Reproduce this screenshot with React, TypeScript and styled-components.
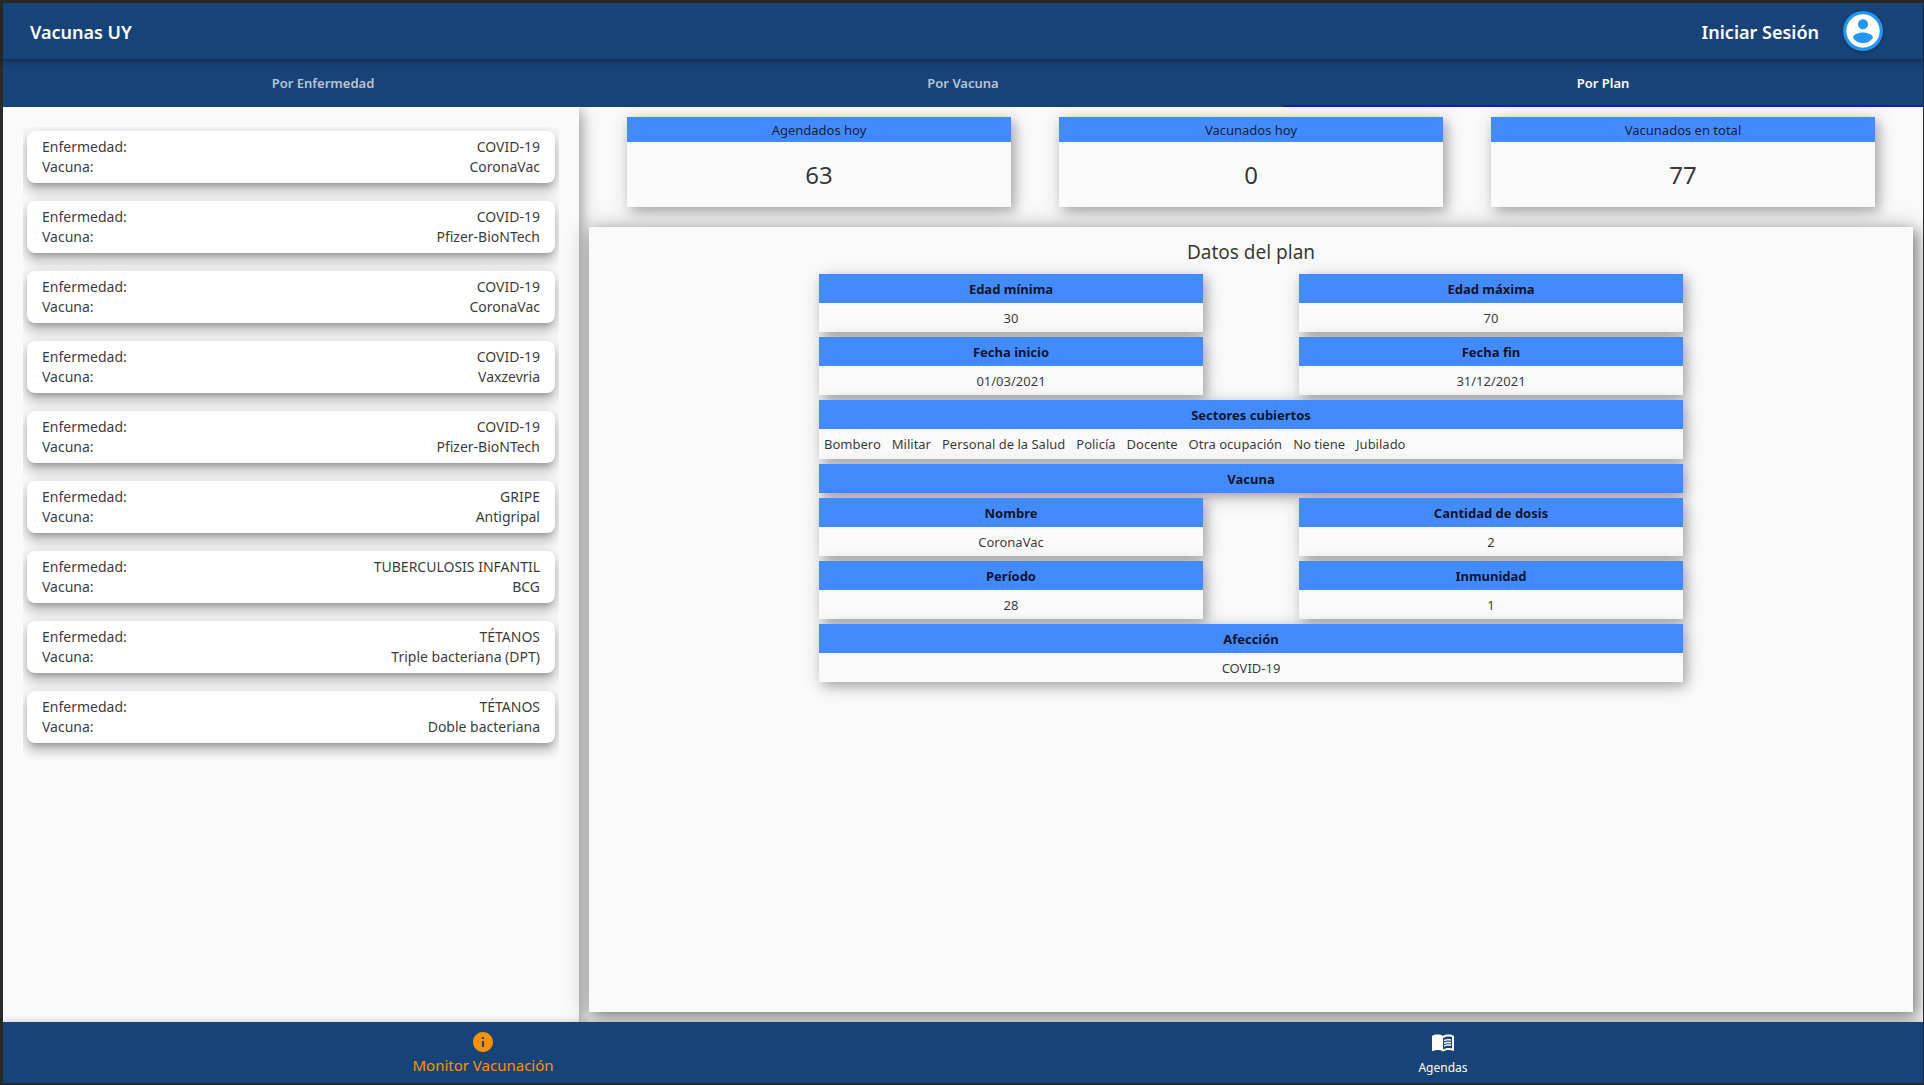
import React, { useState } from "react";
import styled, { createGlobalStyle } from "styled-components";
import { MdInfo, MdMenuBook } from "react-icons/md";

const GlobalStyle = createGlobalStyle`
  *, *::before, *::after { box-sizing: border-box; }
  body { margin: 0; background: #2a2a2a; }
  button { font: inherit; color: inherit; border: 0; background: none; cursor: pointer; }
`;

const colors = {
  navy: "#184378",
  blue: "#448aff",
  surface: "#fafafa",
  text: "rgba(0, 0, 0, 0.8)",
  heading: "rgba(0, 0, 0, 0.87)",
  accent: "#ff9100",
};

/* One fifth and one twentieth of the window inside the frame. */
const fifth = "calc((100vw - 4px) / 5)";
const twentieth = "calc((100vw - 4px) / 20)";

const raised = `
  0 5px 5px -3px rgba(0, 0, 0, 0.2),
  0 8px 12px 1px rgba(0, 0, 0, 0.16),
  0 3px 14px 2px rgba(0, 0, 0, 0.13)`;

const cast = `
  4px 4px 10px rgba(0, 0, 0, 0.2),
  2px 4px 20px rgba(0, 0, 0, 0.2)`;

const castDeep = `
  4px 4px 10px rgba(0, 0, 0, 0.25),
  2px 4px 22px 2px rgba(0, 0, 0, 0.34)`;

const Shell = styled.div`
  display: flex;
  flex-direction: column;
  min-height: 100vh;
  border: solid #2a2a2a;
  border-width: 3px 1px 2px 3px;
  background: ${colors.surface};
  color: ${colors.text};
  font-family: "Segoe UI", "Noto Sans", "Open Sans", sans-serif;
  font-size: 14px;
`;

const TopBar = styled.header`
  position: relative;
  z-index: 3;
  display: flex;
  align-items: center;
  justify-content: space-between;
  height: 56px;
  padding: 0 40px 0 27px;
  background: ${colors.navy};
  color: #fff;
  box-shadow: 0 2px 4px rgba(0, 0, 0, 0.3), 0 2px 8px rgba(0, 0, 0, 0.15);
`;

const Brand = styled.h1`
  margin: 0;
  padding-top: 2px;
  font-size: 18px;
  font-weight: 600;
  line-height: 28px;
`;

const Account = styled.button`
  display: flex;
  align-items: center;
  gap: 24px;
  padding: 0;
`;

const AccountLabel = styled.span`
  padding-top: 2px;
  font-size: 18px;
  font-weight: 600;
  line-height: 28px;
`;

const Avatar = styled.span`
  display: flex;
  align-items: center;
  justify-content: center;
  width: 40px;
  height: 40px;
  border-radius: 50%;
  background: #2196f3;
  box-shadow: 0 1px 3px rgba(0, 0, 0, 0.4);
`;

const Tabs = styled.nav`
  position: relative;
  z-index: 2;
  display: grid;
  grid-template-columns: repeat(3, 1fr);
  height: 48px;
  background: ${colors.navy};
`;

const Tab = styled.button<{ $active: boolean }>`
  padding: 2px 0 0;
  border-bottom: 2px solid ${(p) => (p.$active ? "#0a1fc8" : "transparent")};
  color: ${(p) => (p.$active ? "#fff" : "rgba(255, 255, 255, 0.7)")};
  font-size: 13px;
  font-weight: 600;
`;

const Body = styled.div`
  flex: 1;
  display: grid;
  grid-template-columns: 3fr 7fr;
  overflow: hidden;
`;

const Sidebar = styled.aside`
  padding: 20px;
  background: ${colors.surface};
  box-shadow: ${cast};
`;

const PlanList = styled.ul`
  display: flex;
  flex-direction: column;
  gap: 18px;
  margin: 0;
  padding: 4px 4px 20px;
  list-style: none;
  overflow: hidden;
`;

const PlanCard = styled.button`
  display: block;
  width: 100%;
  padding: 6px 15px;
  border-radius: 8px;
  background: #fff;
  box-shadow: ${raised};
`;

const PlanLine = styled.span`
  display: flex;
  justify-content: space-between;
  line-height: 20px;
`;

const Main = styled.main`
  display: flex;
  flex-direction: column;
  gap: 20px;
  padding: 10px;
`;

const Stats = styled.section`
  display: flex;
  justify-content: space-evenly;
  margin: 0 -10px;
`;

const StatCard = styled.article`
  width: ${fifth};
  background: ${colors.surface};
  box-shadow: ${cast};
  text-align: center;
`;

const StatLabel = styled.h2`
  margin: 0;
  padding-top: 1px;
  background: ${colors.blue};
  font-size: 13px;
  font-weight: 400;
  line-height: 24px;
`;

const StatValue = styled.p`
  margin: 0;
  padding: 16px 0;
  font-size: 24px;
  line-height: 33px;
`;

const PlanPanel = styled.section`
  position: relative;
  flex: 1;
  padding: 10px 0;
  background: ${colors.surface};
  box-shadow: ${castDeep};
`;

const PanelTitle = styled.h2`
  margin: 0 0 7px;
  font-size: 19px;
  font-weight: 400;
  line-height: 30px;
  text-align: center;
`;

const PlanData = styled.dl`
  display: grid;
  grid-template-columns: ${fifth} ${fifth};
  column-gap: ${twentieth};
  row-gap: 5px;
  justify-content: center;
  margin: 0;
  font-size: 13px;
  line-height: 19px;
`;

const Field = styled.div<{ $wide?: boolean }>`
  grid-column: ${(p) => (p.$wide ? "1 / -1" : "auto")};
  background: ${colors.surface};
  box-shadow: ${cast};
  text-align: center;
`;

const FieldLabel = styled.dt`
  padding: 6px 5px 4px;
  background: ${colors.blue};
  color: ${colors.heading};
  font-weight: 700;
`;

const FieldValue = styled.dd`
  margin: 0;
  padding: 6px 5px 4px;
`;

const SectorList = styled(FieldValue)`
  display: flex;
  flex-wrap: wrap;
  gap: 11px;
  padding: 5px;
  line-height: 20px;
`;

const BottomNav = styled.nav`
  position: relative;
  z-index: 2;
  display: grid;
  grid-template-columns: repeat(2, 1fr);
  background: ${colors.navy};
  box-shadow: 0 0 8px rgba(0, 0, 0, 0.2);
`;

const NavItem = styled.button<{ $active: boolean }>`
  display: flex;
  flex-direction: column;
  align-items: center;
  gap: ${(p) => (p.$active ? "1px" : "4px")};
  height: 61px;
  padding: 8px 0 0;
  color: ${(p) => (p.$active ? colors.accent : "#fff")};
  font-size: ${(p) => (p.$active ? "15px" : "12px")};
  line-height: 20px;
`;

const plans = [
  ["COVID-19", "CoronaVac"],
  ["COVID-19", "Pfizer-BioNTech"],
  ["COVID-19", "CoronaVac"],
  ["COVID-19", "Vaxzevria"],
  ["COVID-19", "Pfizer-BioNTech"],
  ["GRIPE", "Antigripal"],
  ["TUBERCULOSIS INFANTIL", "BCG"],
  ["TÉTANOS", "Triple bacteriana (DPT)"],
  ["TÉTANOS", "Doble bacteriana"],
];

const stats = [
  ["Agendados hoy", "63"],
  ["Vacunados hoy", "0"],
  ["Vacunados en total", "77"],
];

const sectors = [
  "Bombero",
  "Militar",
  "Personal de la Salud",
  "Policía",
  "Docente",
  "Otra ocupación",
  "No tiene",
  "Jubilado",
];

const tabs = ["Por Enfermedad", "Por Vacuna", "Por Plan"];

function AccountIcon() {
  return (
    <svg width="40" height="40" viewBox="0 0 24 24" fill="#fff" aria-hidden="true">
      <path d="M12 2C6.48 2 2 6.48 2 12s4.48 10 10 10 10-4.48 10-10S17.52 2 12 2zm0 3c1.66 0 3 1.34 3 3s-1.34 3-3 3-3-1.34-3-3 1.34-3 3-3zm0 14.2c-2.5 0-4.71-1.28-6-3.22.03-1.99 4-3.08 6-3.08 1.99 0 5.97 1.09 6 3.08-1.29 1.94-3.5 3.22-6 3.22z" />
    </svg>
  );
}

function DataField({ label, value, wide }: { label: string; value?: string; wide?: boolean }) {
  return (
    <Field $wide={wide}>
      <FieldLabel>{label}</FieldLabel>
      {value && <FieldValue>{value}</FieldValue>}
    </Field>
  );
}

export default function App() {
  const [tab, setTab] = useState("Por Plan");

  return (
    <Shell>
      <GlobalStyle />
      <TopBar>
        <Brand>Vacunas UY</Brand>
        <Account type="button">
          <AccountLabel>Iniciar Sesión</AccountLabel>
          <Avatar>
            <AccountIcon />
          </Avatar>
        </Account>
      </TopBar>

      <Tabs>
        {tabs.map((name) => (
          <Tab key={name} type="button" $active={name === tab} onClick={() => setTab(name)}>
            {name}
          </Tab>
        ))}
      </Tabs>

      <Body>
        <Sidebar>
          <PlanList>
            {plans.map(([disease, vaccine], i) => (
              <li key={i}>
                <PlanCard type="button">
                  <PlanLine>
                    <span>Enfermedad:</span>
                    <span>{disease}</span>
                  </PlanLine>
                  <PlanLine>
                    <span>Vacuna:</span>
                    <span>{vaccine}</span>
                  </PlanLine>
                </PlanCard>
              </li>
            ))}
          </PlanList>
        </Sidebar>

        <Main>
          <Stats>
            {stats.map(([label, value]) => (
              <StatCard key={label}>
                <StatLabel>{label}</StatLabel>
                <StatValue>{value}</StatValue>
              </StatCard>
            ))}
          </Stats>

          <PlanPanel>
            <PanelTitle>Datos del plan</PanelTitle>
            <PlanData>
              <DataField label="Edad mínima" value="30" />
              <DataField label="Edad máxima" value="70" />
              <DataField label="Fecha inicio" value="01/03/2021" />
              <DataField label="Fecha fin" value="31/12/2021" />
              <Field $wide>
                <FieldLabel>Sectores cubiertos</FieldLabel>
                <SectorList>
                  {sectors.map((s) => (
                    <span key={s}>{s}</span>
                  ))}
                </SectorList>
              </Field>
              <DataField label="Vacuna" wide />
              <DataField label="Nombre" value="CoronaVac" />
              <DataField label="Cantidad de dosis" value="2" />
              <DataField label="Período" value="28" />
              <DataField label="Inmunidad" value="1" />
              <DataField label="Afección" value="COVID-19" wide />
            </PlanData>
          </PlanPanel>
        </Main>
      </Body>

      <BottomNav>
        <NavItem type="button" $active>
          <MdInfo size={24} />
          Monitor Vacunación
        </NavItem>
        <NavItem type="button" $active={false}>
          <MdMenuBook size={24} />
          Agendas
        </NavItem>
      </BottomNav>
    </Shell>
  );
}
